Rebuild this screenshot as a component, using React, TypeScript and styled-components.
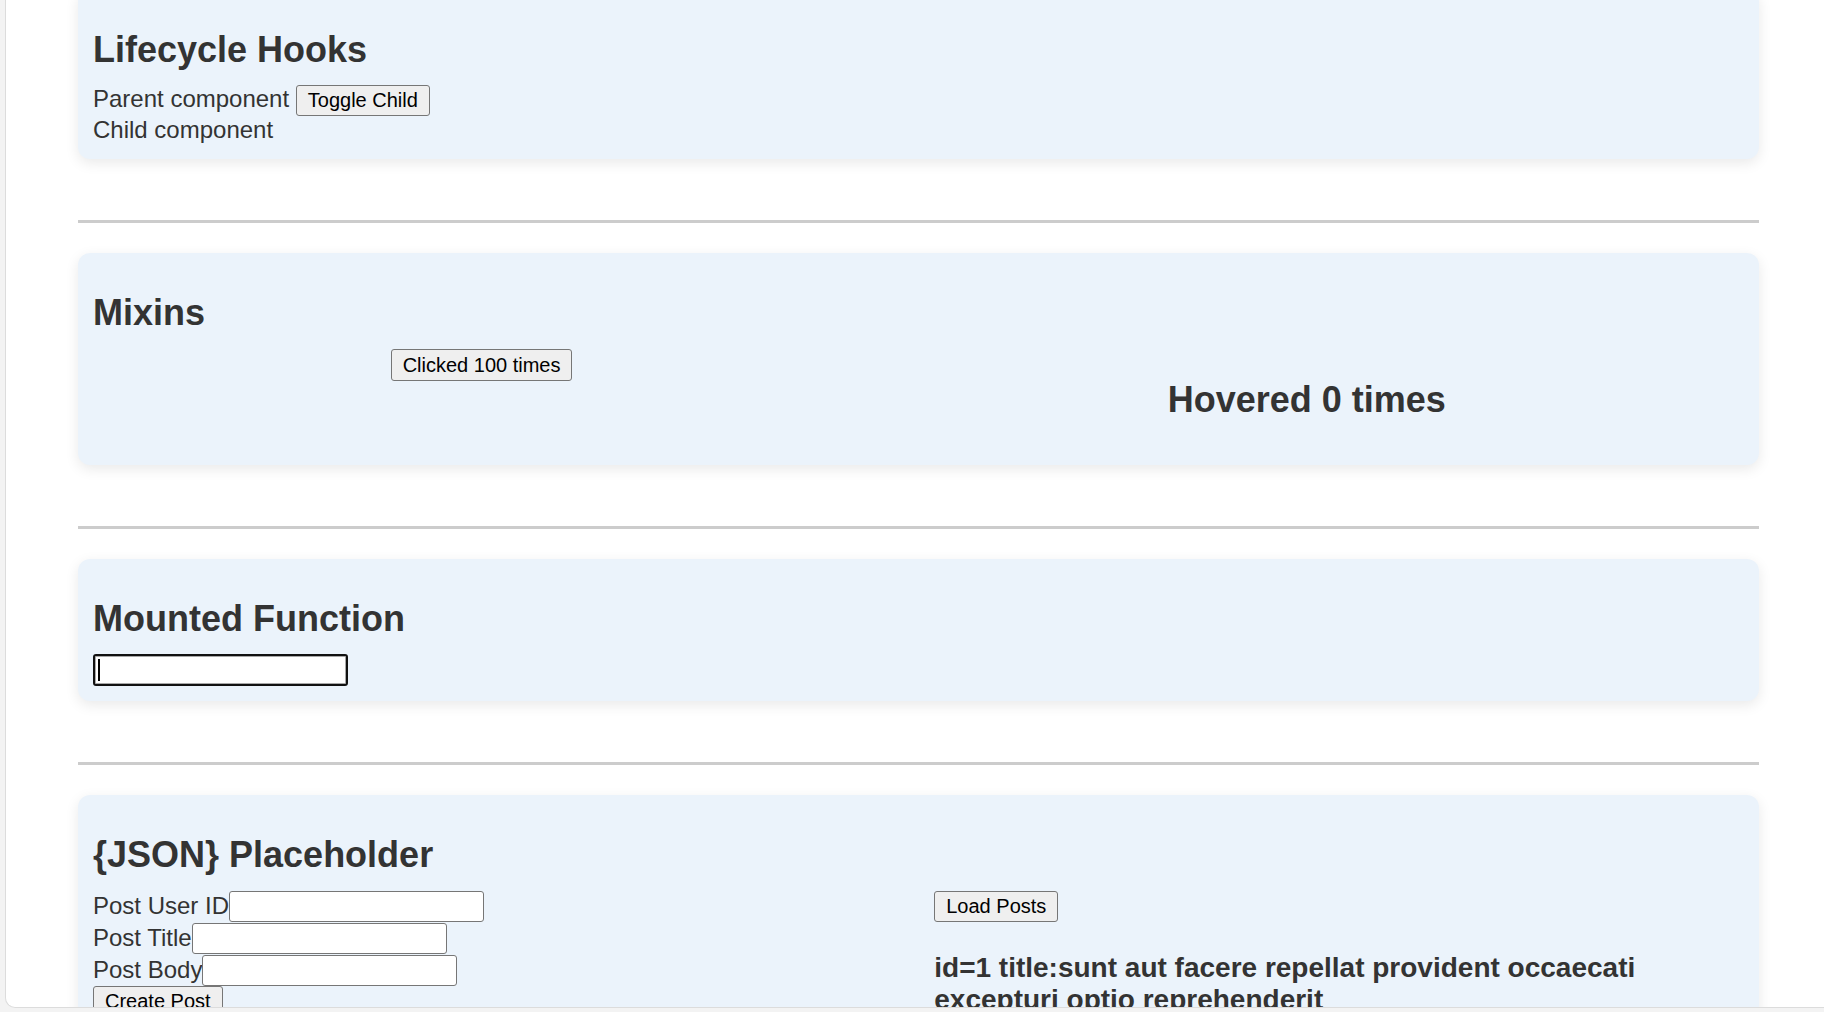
import React, { useLayoutEffect, useRef } from "react";
import styled, { createGlobalStyle } from "styled-components";

const GlobalStyle = createGlobalStyle`
  html, body {
    margin: 0;
    padding: 0;
    background: #f3f3f3;
  }
  body {
    font-family: "Liberation Sans", Arial, sans-serif;
  }
  #root {
    height: 1012px;
  }
`;

const Frame = styled.div`
  margin-left: 5px;
  height: 1008px;
  box-sizing: border-box;
  background: #ffffff;
  border-left: 1px solid #dcdcdc;
  border-bottom: 1px solid #dcdcdc;
  border-bottom-left-radius: 10px;
  overflow: hidden;
`;

const Content = styled.main`
  display: flex;
  flex-direction: column;
  padding: 20px 65.5px 60px 72px;
  color: #333333;
  font-size: 24px;
`;

const Card = styled.section`
  background: #ebf3fb;
  border-radius: 12px;
  padding: 15px;
  box-shadow: 0 4px 14px rgba(0, 0, 0, 0.09);
`;

const Divider = styled.hr`
  border: none;
  height: 3px;
  background: #cccccc;
  margin: 61px 0 30px;
`;

const Title = styled.h2`
  margin: 23.5px 0 14.5px;
  font-size: 36px;
  font-weight: 700;
  line-height: normal;
`;

const Line = styled.div`
  line-height: normal;
`;

const Button = styled.button`
  font-family: "Liberation Sans", Arial, sans-serif;
  font-size: 20px;
  line-height: normal;
  color: #000000;
  background: #efefef;
  border: 1px solid #767676;
  border-radius: 3px;
  padding: 3.2px 11px;
  margin: 0;
  cursor: pointer;
`;

const MixinRow = styled.div`
  display: flex;
  justify-content: space-around;
  align-items: flex-start;
  padding-top: 1px;
`;

const HoverTitle = styled.h2`
  margin: 30px 0 29px;
  font-size: 36px;
  font-weight: 700;
  line-height: normal;
`;

const InputSlot = styled.div`
  position: relative;
  display: flex;
  align-self: flex-start;
`;

const TextInput = styled.input<{ $focused?: boolean }>`
  box-sizing: border-box;
  width: 255px;
  height: ${(p) => (p.$focused ? "31.7px" : "31px")};
  margin: 0;
  padding: 0 4px;
  font-family: "Liberation Sans", Arial, sans-serif;
  font-size: 20px;
  background: #ffffff;
  border: ${(p) => (p.$focused ? "2px solid #111111" : "1px solid #767676")};
  box-shadow: ${(p) => (p.$focused ? "inset 0 0 0 1px #a8a8a8" : "none")};
  border-radius: 3px;
  outline: none;
`;

const Caret = styled.span`
  position: absolute;
  left: 5px;
  top: 5px;
  width: 2px;
  height: 22px;
  background: #000000;
`;

const Columns = styled.div`
  display: grid;
  grid-template-columns: 1fr 1fr;
  column-gap: 32px;
  align-items: start;
`;

const Column = styled.div<{ $offset?: number }>`
  display: flex;
  flex-direction: column;
  align-items: flex-start;
  padding-top: ${(p) => p.$offset ?? 0}px;
`;

const FieldRow = styled.label`
  display: flex;
  align-items: center;
  height: 32px;
  line-height: normal;
`;

const PostTitle = styled.h3`
  margin: 29.5px 0 28px;
  font-size: 28px;
  font-weight: 700;
  line-height: normal;
`;

export default function App() {
  const frameRef = useRef<HTMLDivElement>(null);

  useLayoutEffect(() => {
    if (frameRef.current) frameRef.current.scrollTop = 30;
  }, []);

  return (
    <>
      <GlobalStyle />
      <Frame ref={frameRef}>
        <Content>
          <Card>
            <Title>Lifecycle Hooks</Title>
            <Line>
              Parent component <Button>Toggle Child</Button>
            </Line>
            <Line>Child component</Line>
          </Card>
          <Divider />
          <Card>
            <Title>Mixins</Title>
            <MixinRow>
              <Button>Clicked 100 times</Button>
              <HoverTitle>Hovered 0 times</HoverTitle>
            </MixinRow>
          </Card>
          <Divider />
          <Card>
            <Title>Mounted Function</Title>
            <InputSlot>
              <TextInput $focused type="text" />
              <Caret />
            </InputSlot>
          </Card>
          <Divider />
          <Card>
            <Title>{"{JSON} Placeholder"}</Title>
            <Columns>
              <Column>
                <FieldRow>
                  Post User ID
                  <TextInput type="text" />
                </FieldRow>
                <FieldRow>
                  Post Title
                  <TextInput type="text" />
                </FieldRow>
                <FieldRow>
                  Post Body
                  <TextInput type="text" />
                </FieldRow>
                <Button>Create Post</Button>
              </Column>
              <Column $offset={1}>
                <Button>Load Posts</Button>
                <PostTitle>
                  id=1 title:sunt aut facere repellat provident occaecati excepturi optio
                  reprehenderit
                </PostTitle>
              </Column>
            </Columns>
          </Card>
        </Content>
      </Frame>
    </>
  );
}
